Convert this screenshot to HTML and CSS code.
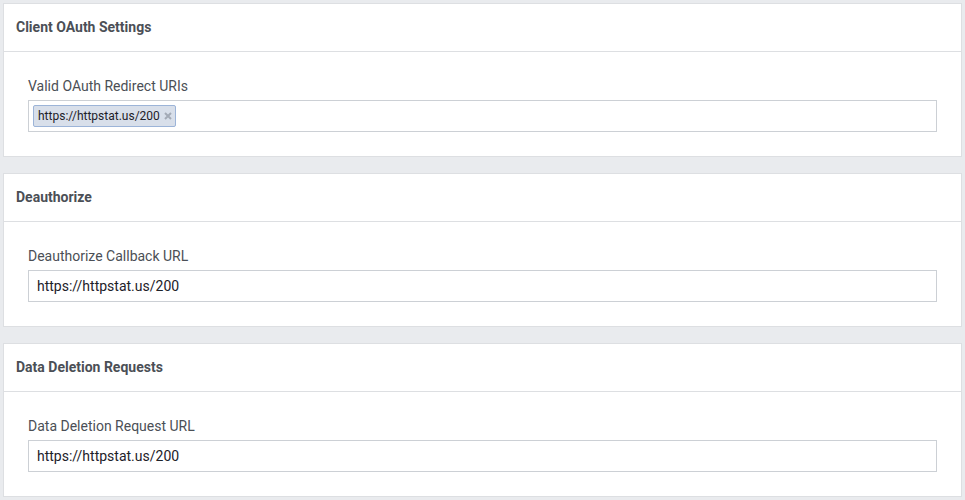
FILE: index.html
```html
<!DOCTYPE html>
<html>
<head>
<meta charset="utf-8">
<link rel="stylesheet" href="styles.css">
</head>
<body>
<div class="page">
  <section class="card">
    <div class="card-header">Client OAuth Settings</div>
    <div class="card-body">
      <label class="field-label">Valid OAuth Redirect URIs</label>
      <div class="input tokens">
        <span class="token">https://httpstat.us/200<svg class="token-x" width="8" height="8" viewBox="0 0 8 8"><path d="M1 1L7 7M7 1L1 7" stroke="#a3aab6" stroke-width="2"/></svg></span>
      </div>
    </div>
  </section>
  <section class="card">
    <div class="card-header">Deauthorize</div>
    <div class="card-body">
      <label class="field-label">Deauthorize Callback URL</label>
      <div class="input">https://httpstat.us/200</div>
    </div>
  </section>
  <section class="card">
    <div class="card-header">Data Deletion Requests</div>
    <div class="card-body">
      <label class="field-label">Data Deletion Request URL</label>
      <div class="input">https://httpstat.us/200</div>
    </div>
  </section>
</div>
</body>
</html>
```
FILE: styles.css
```css
html, body {
  margin: 0;
  padding: 0;
  background: #e9ebee;
  font-family: Roboto, "Liberation Sans", Arial, sans-serif;
}
.page {
  padding: 3px 3px 0 3px;
  display: flex;
  flex-direction: column;
  gap: 16px;
}
.card {
  background: #fff;
  border: 1px solid #dddfe2;
}
.card-header {
  height: 48px;
  box-sizing: border-box;
  padding: 0 12px 2px 12px;
  display: flex;
  align-items: center;
  font-size: 14px;
  font-weight: bold;
  color: #4b4f56;
  border-bottom: 1px solid #dddfe2;
}
.card-body {
  padding: 24px;
  display: flex;
  flex-direction: column;
}
.field-label {
  font-size: 14px;
  line-height: 20px;
  color: #4b4f56;
  margin-bottom: 4px;
}
.input {
  height: 32px;
  box-sizing: border-box;
  border: 1px solid #ccd0d5;
  padding: 0 8px;
  display: flex;
  align-items: center;
  font-size: 14px;
  color: #1d2129;
}
.input.tokens {
  padding: 0 4px;
}
.token {
  display: inline-flex;
  align-items: center;
  height: 22px;
  box-sizing: border-box;
  padding: 0 3px 0 4px;
  background: #d8dfea;
  border: 1px solid #9cb4d8;
  border-radius: 2px;
  font-size: 12px;
  color: #1d2129;
}
.token-x {
  margin-left: 4px;
  display: block;
}
```
